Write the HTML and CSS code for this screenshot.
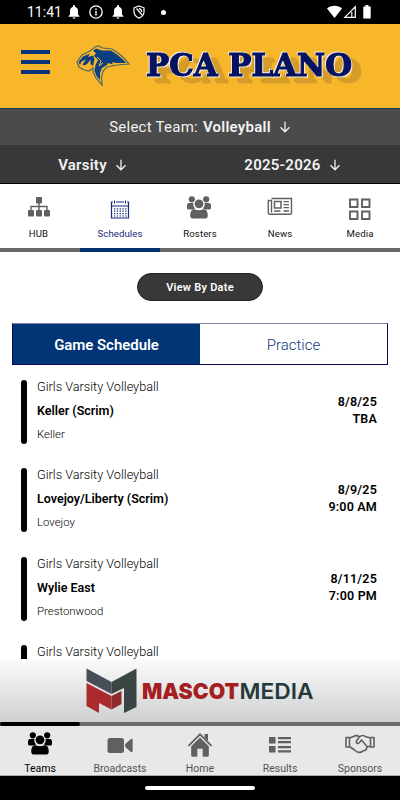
FILE: index.html
```
<!DOCTYPE html>
<html lang="en">
<head>
  <meta charset="UTF-8">
  <meta name="viewport" content="width=device-width, initial-scale=1.0">
  <title>PCA Plano - Schedules</title>
  <link rel="stylesheet" href="styles.css">
</head>
<body>
  <svg class="defs" width="0" height="0">
    <symbol id="bell" viewBox="0 0 12 14">
      <path d="M6 0a1 1 0 0 1 1 1v.8c2 .6 3 2.200 3 4.200v3.500l1.400 1.500v.8H.6V11L2 9.500V6c0-2 1-3.600 3-4.200V1a1 1 0 0 1 1-1zM4.600 12.400h2.800a1.400 1.400 0 0 1-2.800 0z" fill="currentColor"/>
    </symbol>
    <symbol id="arrow" viewBox="0 0 12 12">
      <path d="M6 .8v10M1.500 6.300 6 10.800l4.500-4.500" fill="none" stroke="currentColor" stroke-width="1.300"/>
    </symbol>
    <symbol id="people" viewBox="0 0 24 23">
      <g fill="currentColor">
        <circle cx="4.800" cy="3.300" r="3.100"/>
        <circle cx="19.200" cy="3.300" r="3.100"/>
        <circle cx="12" cy="7.800" r="4.400"/>
        <path d="M1.800 7h4.600c-.4 2.200.2 4 1.800 5.500-.8.200-1.500.5-2 .9H1.500C.6 13.400 0 12.800 0 12V9.500C.2 8 .8 7.200 1.800 7zM22.200 7h-4.600c.4 2.200-.2 4-1.800 5.500.8.200 1.500.5 2 .9h4.700c.9 0 1.500-.6 1.500-1.400V9.500C23.800 8 23.200 7.200 22.200 7z"/>
        <path d="M7.800 13.200c2.600 1.500 5.800 1.500 8.400 0 3 0 4.500 2 4.600 6.300 0 2-1 3.100-2.800 3.100H6c-1.800 0-2.800-1.100-2.800-3.100.1-4.300 1.600-6.300 4.600-6.300z"/>
      </g>
    </symbol>
  </svg>

  <div class="status-bar">
    <span class="clock">11:41</span>
    <svg class="bell" width="12" height="14"><use href="#bell"/></svg>
    <svg width="14" height="14" viewBox="0 0 14 14"><circle cx="7" cy="7" r="6.200" fill="none" stroke="#fff" stroke-width="1.300"/><path d="M7 3.400v1.500M7 6v4.600" stroke="#fff" stroke-width="1.400"/></svg>
    <svg class="bell" width="12" height="14"><use href="#bell"/></svg>
    <svg width="12" height="14" viewBox="0 0 12 14"><path d="M6 1l5 1.800v4c0 2.900-2 5-5 6.300C3 11.800 1 9.700 1 6.800v-4z" fill="none" stroke="#fff" stroke-width="1.200"/><path d="M3.500 3.500 9 10M6 3.600q3 .6 2.600 3.400" fill="none" stroke="#fff" stroke-width="1.200"/></svg>
    <span class="dot"></span>
    <svg class="signals" width="46" height="14" viewBox="0 0 46 14">
      <path d="M0 3.500C4-.2 11-.2 15 3.500L7.500 13z" fill="#fff"/>
      <path d="M28.300 1.800v10.600H17.800zM24.800 7v5" fill="none" stroke="#fff" stroke-width="1.200"/>
      <path d="M36.300 1.500h2.200V0h3v1.500h2.200v12h-7.400z" fill="#fff"/>
    </svg>
  </div>

  <header class="header">
    <div class="menu-btn"><span></span><span></span><span></span></div>
    <svg class="eagle" width="56" height="42" viewBox="0 0 56 42">
      <path d="M1 17 6 10 14 6 19 2 22 1 27 3 36 4 42 8 48 13 53 19 41 20 31 22 27 26 25.500 32 26 40 20 33 17 27 17 23 13 26 8 25 3 22z" fill="#f8b62b" stroke="#4d6b66" stroke-width="1.200"/>
      <path d="M17 6 20 3.500 26 5.500 35 5.500 41 9.500 47 14.500 50 18 40 18 36 17 37 19.500 32 18 31 20 26 23 24 28 24 35 20.500 31 18.500 26 19.500 20 22 15 18 11 20 8z" fill="#0c3f80"/>
      <path d="M2.500 17 7 11.500 14 8.500 12 12 17 10.500 18.500 14 17 21 14.500 19 14.500 14.500 12 18 9 20.500 6.500 19.500 10 14.500 5.500 16.500 4 20z" fill="#0c3f80"/>
      <path d="M21 12 25 16 23 21 27 18" fill="none" stroke="#f8b62b"/>
    </svg>
    <svg class="team-name" width="220" height="42" viewBox="0 0 220 42">
      <text x="3" y="28.500" textLength="206" lengthAdjust="spacingAndGlyphs">PCA PLANO</text>
    </svg>
  </header>

  <div class="select-team">
    Select Team: <b>Volleyball</b> <svg width="12" height="12"><use href="#arrow"/></svg>
  </div>
  <div class="select-level">
    <div class="level"><b>Varsity</b> <svg width="12" height="12"><use href="#arrow"/></svg></div>
    <div class="season"><b>2025-2026</b> <svg width="12" height="12"><use href="#arrow"/></svg></div>
  </div>

  <nav class="tabs">
    <div class="tab hub">
      <svg width="24" height="22" viewBox="0 0 24 22"><g fill="currentColor"><rect x="9" y="0" width="6" height="6.500" rx="1"/><rect x="1" y="13" width="6" height="6.500" rx="1"/><rect x="9" y="13" width="6" height="6.500" rx="1"/><rect x="17" y="13" width="6" height="6.500" rx="1"/></g><path d="M12 6v7M4 13V9.500h16V13" fill="none" stroke="currentColor" stroke-width="1.400"/></svg>
      <span>HUB</span>
    </div>
    <div class="tab active">
      <svg width="20" height="22" viewBox="0 0 20 22"><path d="M3 5H1.500v16h17V5H17M6 5h8M1 9h18" fill="none" stroke="currentColor" stroke-width="1.200"/><path d="M4.500 3.500v3M15.500 3.500v3" stroke="currentColor" stroke-width="1"/><path d="M4 11.800h13M4 14.200h13M4 16.600h13M4 19h13" stroke="currentColor" stroke-width="1.200" stroke-dasharray="1.300 1.500"/></svg>
      <span>Schedules</span>
    </div>
    <div class="tab">
      <svg class="people" width="24" height="23"><use href="#people"/></svg>
      <span>Rosters</span>
    </div>
    <div class="tab">
      <svg width="26" height="22" viewBox="0 0 26 22"><path d="M4.500 1.500h20v14.500q0 1.200-1.200 1.200H3q-1.700 0-1.700-1.500V3.500h3.200v12" fill="none" stroke="currentColor" stroke-width="1.400"/><rect x="7.500" y="4.500" width="6.500" height="6.500" fill="none" stroke="currentColor" stroke-width="1.500"/><path d="M16.500 4.700H22M16.500 7.700H22M16.500 10.700H22M7 14h6.500M16.500 14H22" stroke="currentColor" stroke-width="1.300"/></svg>
      <span>News</span>
    </div>
    <div class="tab">
      <svg width="24" height="23" viewBox="0 0 24 23"><path d="M2 2.500h7.500V10H2zM14 2.500h7.500V10H14zM2 14.500h7.500V22H2zM14 14.500h7.500V22H14z" fill="none" stroke="currentColor" stroke-width="1.900"/></svg>
      <span class="media-label">Media</span>
    </div>
  </nav>
  <div class="tab-line"><span></span></div>

  <main class="content">
    <button class="view-btn">View By Date</button>
    <div class="switch">
      <div class="switch-item selected">Game Schedule</div>
      <div class="switch-item">Practice</div>
    </div>

    <div class="game">
      <div class="bar"></div>
      <div class="game-info">
        <p class="team">Girls Varsity Volleyball</p>
        <p class="opponent">Keller (Scrim)</p>
        <p class="place">Keller</p>
      </div>
      <div class="game-time">8/8/25<br>TBA</div>
    </div>
    <div class="game">
      <div class="bar"></div>
      <div class="game-info">
        <p class="team">Girls Varsity Volleyball</p>
        <p class="opponent">Lovejoy/Liberty (Scrim)</p>
        <p class="place">Lovejoy</p>
      </div>
      <div class="game-time">8/9/25<br>9:00 AM</div>
    </div>
    <div class="game">
      <div class="bar"></div>
      <div class="game-info">
        <p class="team">Girls Varsity Volleyball</p>
        <p class="opponent">Wylie East</p>
        <p class="place">Prestonwood</p>
      </div>
      <div class="game-time">8/11/25<br>7:00 PM</div>
    </div>
    <div class="game">
      <div class="bar"></div>
      <div class="game-info">
        <p class="team">Girls Varsity Volleyball</p>
      </div>
    </div>
  </main>

  <div class="banner">
    <svg width="230" height="48" viewBox="0 0 230 48">
      <path d="M.5 1.500 25.500 15v12L.5 14z" fill="#474e57"/>
      <path d="M50.500 1.500 25.500 15v12l12.500-6v25l12.500-6z" fill="#3b4543"/>
      <path d="M.5 16l25 13v13.500l-12.500-6.500v10L.5 39z" fill="#ab2a2d"/>
      <path d="M25.500 29l10-5v13l-10 5.500z" fill="#8e2a2e"/>
      <text class="mascot" x="56" y="31.500" textLength="97" lengthAdjust="spacingAndGlyphs">MASCOT</text>
      <text class="media" x="153.500" y="31.500" textLength="74" lengthAdjust="spacingAndGlyphs">MEDIA</text>
    </svg>
  </div>

  <div class="bottom-line"><span></span></div>
  <nav class="bottom-nav">
    <div class="nav-item active">
      <svg width="24" height="23"><use href="#people"/></svg>
      <span>Teams</span>
    </div>
    <div class="nav-item">
      <svg width="26" height="23" viewBox="0 0 26 23"><g fill="currentColor"><rect x=".5" y="6" width="16.500" height="15" rx="2.500"/><path d="M18.200 12 24 7q1.600-.8 1.600 1v11q0 1.800-1.600 1l-5.800-5z"/></g></svg>
      <span>Broadcasts</span>
    </div>
    <div class="nav-item">
      <svg width="26" height="25" viewBox="0 0 26 25"><path d="M13 5.500l8.800 8.800v9.200q0 1.200-1.300 1.200h-4.800v-8h-5.400v8H5.500q-1.300 0-1.300-1.200v-9.200zM17.500 2H21v7l-3.500-3.500z" fill="currentColor"/><path d="M1.500 13.800 13 2.300l11.500 11.500" fill="none" stroke="currentColor" stroke-width="1.700"/></svg>
      <span class="home-label">Home</span>
    </div>
    <div class="nav-item">
      <svg width="24" height="23" viewBox="0 0 24 23"><path d="M1 5h6.500v6.500H1zM1 14h6.500v6.500H1zM10 5h13v2.200H10zM10 9h13v2.200H10zM10 14h13v2.200H10zM10 18.300h13v2.200H10z" fill="currentColor"/></svg>
      <span>Results</span>
    </div>
    <div class="nav-item">
      <svg width="30" height="23" viewBox="0 0 30 23"><path d="M1 5.500h3.500v9.500H1zM25.500 5.500H29v9.500h-3.500zM4.500 6l4-1.500c2-1.300 4-1.300 6 .3 2-1.600 4.500-1.600 6.500 0l4.500 1.200M4.500 14.500l5 3.500c3 2.800 6 3.200 8.500.8 2.500 0 3.500-1.300 3.500-2.500l1.500-1.800h2.500M14.500 4.800l-3.200 4.500c-.4 2 1.800 2.700 3.200 1.200l2-2.500 5.500 6.500" fill="none" stroke="currentColor" stroke-width="1.600" stroke-linejoin="round"/></svg>
      <span>Sponsors</span>
    </div>
  </nav>
  <div class="home-bar"><span></span></div>
</body>
</html>
```
FILE: styles.css
```
/* General Reset */
* {
  margin: 0;
  padding: 0;
  box-sizing: border-box;
}

body {
  width: 400px;
  height: 800px;
  overflow: hidden;
  display: flex;
  flex-direction: column;
  background: #fff;
  color: #000;
  font-family: Roboto, sans-serif;
}

body > * {
  flex-shrink: 0;
}

svg {
  display: block;
  flex-shrink: 0;
}

.defs {
  position: absolute;
}

/* Phone status bar */
.status-bar {
  height: 24px;
  background: #000;
  color: #fff;
  display: flex;
  align-items: center;
  padding: 0 27px 0 27px;
}

.status-bar svg {
  margin-right: 9px;
}

.clock {
  width: 41px;
  font-size: 14px;
}

.dot {
  width: 5px;
  height: 5px;
  margin-left: 7px;
  border-radius: 50%;
  background: #fff;
}

.status-bar .signals {
  margin: 0 0 0 auto;
}

/* School header */
.header {
  height: 85px;
  background: #f8b62b;
  border-bottom: 1px solid #0b4356;
  display: flex;
  align-items: center;
  padding-left: 21px;
}

.menu-btn {
  width: 29px;
  height: 24px;
  margin-top: -8px;
  display: flex;
  flex-direction: column;
  justify-content: space-between;
}

.menu-btn span {
  height: 4px;
  background: #06357a;
}

.eagle {
  margin-left: 26px;
}

.team-name {
  margin: 3px 0 0 11px;
  overflow: visible;
}

/* white outline first, then the offset shadow */
.team-name text {
  font-family: "DejaVu Serif", serif;
  font-weight: bold;
  font-size: 31px;
  fill: #06135f;
  stroke: #06135f;
  stroke-width: 1.2px;
  filter: drop-shadow(1px 1px 0 #f3eef0) drop-shadow(-1px -1px 0 #f3eef0) drop-shadow(9px 6px 0 #d59d28);
}

/* Team selectors */
.select-team,
.select-level {
  display: flex;
  align-items: center;
  justify-content: center;
  color: #f2f2f2;
  font-size: 15px;
}

.select-team {
  height: 36px;
  background: #4b4b4b;
  letter-spacing: 0.25px;
}

.select-team b {
  margin-left: 5px;
}

.select-level {
  height: 39px;
  background: #383838;
  border-bottom: 1px solid #000;
}

.select-team b,
.select-level b {
  font-weight: 600;
  letter-spacing: 0.25px;
}

.select-team svg,
.select-level svg {
  margin-left: 8px;
}

.level,
.season {
  display: flex;
  align-items: center;
  justify-content: center;
  padding-top: 2px;
}

.level {
  width: 185px;
}

.season {
  width: 215px;
}

/* Top tabs */
.tabs {
  height: 64px;
  display: flex;
}

.tab,
.nav-item {
  width: 80px;
  display: flex;
  flex-direction: column;
  align-items: center;
  color: #606060;
}

.tab {
  padding-top: 13px;
}

.tab.hub {
  padding-right: 3px;
}

.tab .people {
  margin: -1px 2px 0 0;
}

.tab span {
  margin-top: 9px;
  color: #111;
  font-size: 9.6px;
  line-height: 12px;
  letter-spacing: 0.1px;
}

.tab .media-label {
  margin-top: 8px;
}

.tab.active,
.tab.active span {
  color: #14297c;
}

.tab-line,
.bottom-line {
  height: 4px;
  background: #686b69;
}

.tab-line span {
  display: block;
  width: 80px;
  height: 4px;
  margin-left: 80px;
  background: #00306f;
}

/* Schedule */
.content {
  height: 407px;
  overflow: hidden;
  padding: 21px 12px 0;
}

.view-btn {
  display: block;
  width: 126px;
  height: 28px;
  margin: 0 auto 22px;
  border: 1px solid #222;
  border-radius: 14px;
  background: #383838;
  color: #fff;
  font: 600 11px Roboto, sans-serif;
  letter-spacing: 0.25px;
}

.switch {
  height: 42px;
  margin-bottom: 15px;
  border: 1px solid #0b0b55;
  border-top-color: #7d82a5;
  display: flex;
}

.switch-item {
  flex: 1;
  color: #14387c;
  font-size: 15px;
  font-weight: 300;
  line-height: 42px;
  text-align: center;
}

.switch-item.selected {
  background: #023576;
  color: #fff;
  font-weight: 600;
  letter-spacing: -0.05px;
}

.game {
  height: 88.4px;
  display: flex;
  padding: 0 11px 0 9px;
}

.bar {
  width: 6px;
  height: 64px;
  margin-right: 10px;
  border-radius: 3px;
  background: #000;
}

.game-info {
  flex: 1;
  margin-top: -1px;
}

.team {
  font-size: 12.7px;
  font-weight: 300;
  line-height: 15px;
}

.opponent {
  margin-top: 9px;
  font-size: 12.5px;
  font-weight: 600;
  line-height: 16px;
}

.place {
  margin-top: 8px;
  font-size: 11.4px;
  font-weight: 300;
  line-height: 15px;
}

.game-time {
  padding-top: 13px;
  font-size: 12.5px;
  font-weight: 600;
  line-height: 17px;
  text-align: right;
  letter-spacing: 0.2px;
}

/* Sponsor banner */
.banner {
  height: 63px;
  padding: 8px 0 0 86px;
  background: linear-gradient(#fbfbfb, #cfd0d2);
}

.mascot,
.media {
  font-family: Inter, sans-serif;
  font-size: 22px;
}

.mascot {
  font-weight: 900;
  fill: #a51e22;
}

.media {
  font-weight: 600;
  fill: #26393a;
}

/* Bottom navigation */
.bottom-line span {
  display: block;
  width: 80px;
  height: 4px;
  border-radius: 2px;
  background: #000;
}

.bottom-nav {
  height: 50px;
  display: flex;
  background: #e8e8e8;
  border-bottom: 1px solid #aaa;
}

.nav-item {
  padding-top: 6px;
}

.nav-item span {
  margin-top: 8px;
  color: #555;
  font-size: 10.5px;
  line-height: 12px;
}

.nav-item .home-label {
  margin-top: 6px;
}

.nav-item.active,
.nav-item.active span {
  color: #000;
}

.home-bar {
  height: 24px;
  padding-top: 10px;
  background: #000;
}

.home-bar span {
  display: block;
  width: 110px;
  height: 4px;
  margin: 0 auto;
  border-radius: 2px;
  background: #fff;
}
```
